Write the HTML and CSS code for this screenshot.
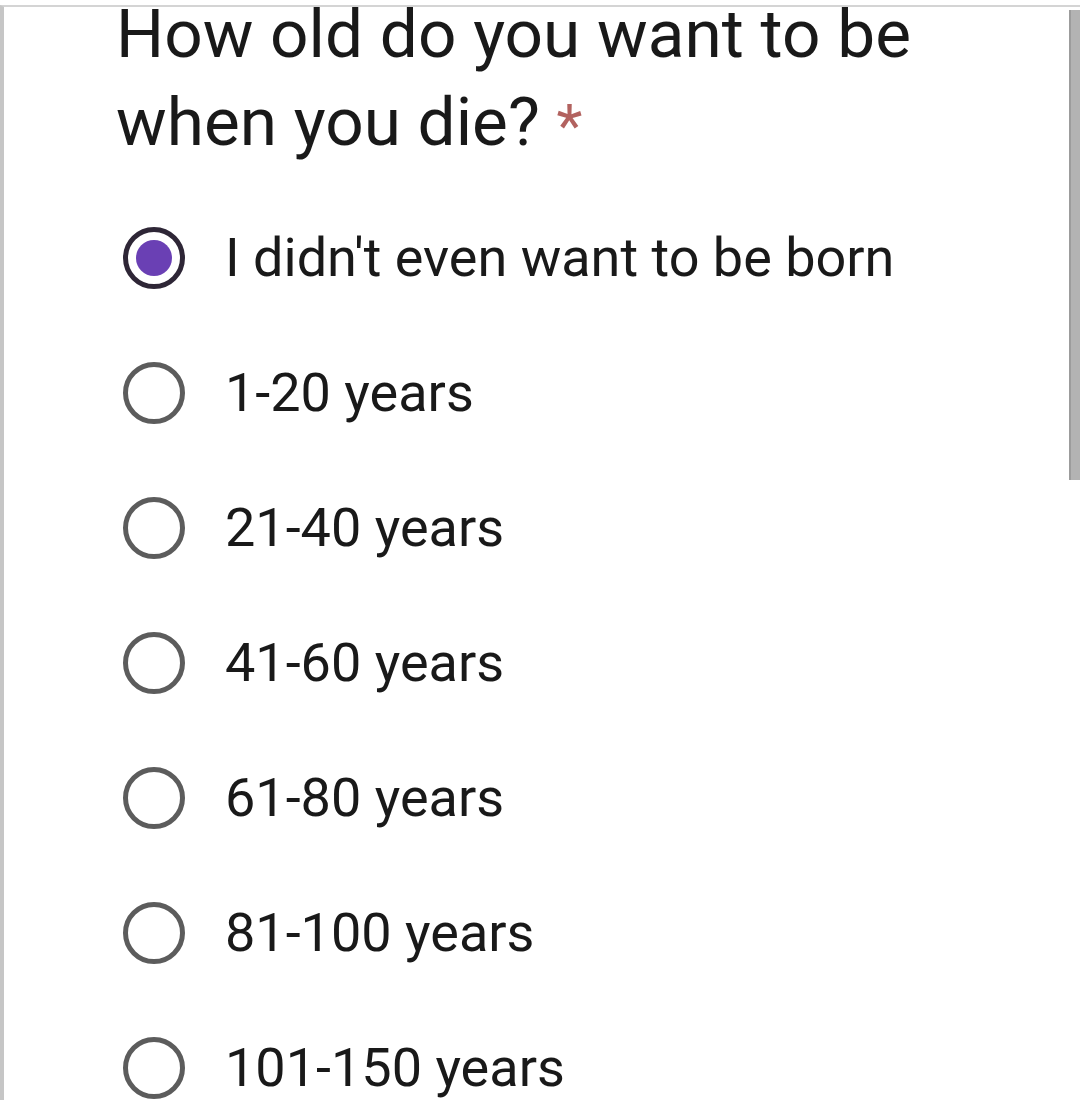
FILE: index.html
```html
<!DOCTYPE html>
<html>
<head>
<meta charset="utf-8">
<link rel="stylesheet" href="styles.css">
</head>
<body>
<div class="frame">
  <div class="scrollbar"></div>
  <h1 class="title">How old do you want to be when you die? <span class="req">*</span></h1>
  <ul class="options">
    <li class="option"><span class="radio checked"><span class="dot"></span></span><span class="label">I didn't even want to be born</span></li>
    <li class="option"><span class="radio"></span><span class="label">1-20 years</span></li>
    <li class="option"><span class="radio"></span><span class="label">21-40 years</span></li>
    <li class="option"><span class="radio"></span><span class="label">41-60 years</span></li>
    <li class="option"><span class="radio"></span><span class="label">61-80 years</span></li>
    <li class="option"><span class="radio"></span><span class="label">81-100 years</span></li>
    <li class="option"><span class="radio"></span><span class="label">101-150 years</span></li>
  </ul>
</div>
</body>
</html>
```
FILE: styles.css
```css
html, body {
  margin: 0;
  padding: 0;
  background: #ffffff;
}
body {
  width: 1080px;
  height: 1110px;
  overflow: hidden;
  font-family: Roboto, "Liberation Sans", Arial, sans-serif;
  color: #191919;
}
.frame {
  position: relative;
  margin-top: 5px;
  height: 1095px;
  border-top: 2px solid #d4d4d4;
  border-left: 4px solid #c6c6c6;
  box-sizing: border-box;
  overflow: hidden;
}
.scrollbar {
  position: absolute;
  right: 0;
  top: 3px;
  width: 9px;
  height: 470px;
  background: #b3b3b3;
  border-left: 2px solid #9c9c9c;
}
.title {
  margin: -17px 0 0 0;
  padding-left: 112px;
  width: 840px;
  font-size: 67.5px;
  font-weight: 400;
  line-height: 88px;
}
.req {
  color: #b2625f;
  font-size: 60px;
  line-height: 0;
  vertical-align: -1px;
  margin-left: 0;
}
.options {
  list-style: none;
  margin: 24px 0 0 0;
  padding: 0 0 0 119px;
}
.option {
  height: 135px;
  display: flex;
  align-items: center;
  gap: 40px;
}
.radio {
  width: 62px;
  height: 62px;
  box-sizing: border-box;
  border: 5px solid #5c5c5c;
  border-radius: 50%;
  display: flex;
  align-items: center;
  justify-content: center;
  flex: none;
}
.radio.checked {
  border-color: #2e2636;
}
.dot {
  width: 36px;
  height: 36px;
  border-radius: 50%;
  background: #6a40b4;
}
.label {
  font-size: 54px;
  line-height: 62px;
}
```
